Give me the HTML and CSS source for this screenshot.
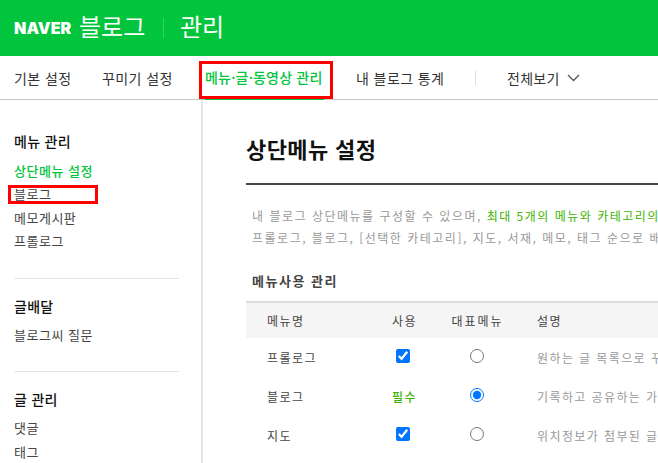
FILE: index.html
```html
<!DOCTYPE html>
<html lang="ko">
<head>
<meta charset="utf-8">
<title>블로그 관리</title>
<link rel="stylesheet" href="styles.css">
</head>
<body>
<header class="top">
  <span class="naver">NAVER</span>
  <span class="blog">블로그</span>
  <span class="top-sep"></span>
  <span class="manage">관리</span>
</header>
<nav class="tabs">
  <a class="tab">기본 설정</a>
  <a class="tab">꾸미기 설정</a>
  <a class="tab active">메뉴·글·동영상 관리</a>
  <a class="tab">내 블로그 통계</a>
  <span class="tab-sep"></span>
  <a class="tab all">전체보기
    <svg class="chev" width="13" height="8" viewBox="0 0 13 8"><path d="M1 1l5.5 5.5L12 1" fill="none" stroke="#555" stroke-width="1.3"/></svg>
  </a>
  <span class="mark mark-tab"></span>
</nav>
<div class="body">
  <aside class="side">
    <section class="group">
      <h3>메뉴 관리</h3>
      <ul>
        <li class="on">상단메뉴 설정</li>
        <li>블로그</li>
        <li>메모게시판</li>
        <li>프롤로그</li>
      </ul>
    </section>
    <section class="group">
      <h3>글배달</h3>
      <ul><li>블로그씨 질문</li></ul>
    </section>
    <section class="group">
      <h3>글 관리</h3>
      <ul><li>댓글</li><li>태그</li></ul>
    </section>
    <span class="mark mark-side"></span>
  </aside>
  <main class="main">
    <h1>상단메뉴 설정</h1>
    <p class="desc">내 블로그 상단메뉴를 구성할 수 있으며, <em>최대 5개의 메뉴와 카테고리의 상단메뉴를 지정할 수 있습니다.</em><br>프롤로그, 블로그, [선택한 카테고리], 지도, 서재, 메모, 태그 순으로 배치됩니다.</p>
    <h2>메뉴사용 관리</h2>
    <table class="grid">
      <thead>
        <tr><th class="c-name">메뉴명</th><th class="c-use">사용</th><th class="c-rep">대표메뉴</th><th class="c-desc">설명</th></tr>
      </thead>
      <tbody>
        <tr>
          <td class="c-name">프롤로그</td>
          <td class="c-use"><input type="checkbox" checked></td>
          <td class="c-rep"><input type="radio" name="rep"></td>
          <td class="c-desc">원하는 글 목록으로 꾸밀 수 있는 메뉴입니다.</td>
        </tr>
        <tr>
          <td class="c-name">블로그</td>
          <td class="c-use must">필수</td>
          <td class="c-rep"><input type="radio" name="rep" checked></td>
          <td class="c-desc">기록하고 공유하는 가장 기본이 되는 메뉴입니다.</td>
        </tr>
        <tr>
          <td class="c-name">지도</td>
          <td class="c-use"><input type="checkbox" checked></td>
          <td class="c-rep"><input type="radio" name="rep"></td>
          <td class="c-desc">위치정보가 첨부된 글을 모아보는 메뉴입니다.</td>
        </tr>
      </tbody>
    </table>
  </main>
</div>
</body>
</html>
```
FILE: styles.css
```css
* { box-sizing: border-box; }
html, body { margin: 0; height: 100%; overflow: hidden; }
body {
  width: 658px;
  height: 463px;
  background: #fff;
  color: #333;
  font-family: "Noto Sans CJK KR", "Noto Sans", sans-serif;
  font-size: 13px;
  overflow: hidden;
}
.top {
  height: 56px;
  background: #03c53d;
  color: #fff;
  display: flex;
  align-items: center;
  padding-left: 14px;
}
.naver { font: 900 16px/1 "Inter", "Liberation Sans", sans-serif; width: 58px; letter-spacing: 0.1px; white-space: nowrap; }
.blog { font-size: 24px; line-height: 1; width: 73px; margin-left: 7px; white-space: nowrap; margin-top: -5px; }
.top-sep { width: 1px; height: 20px; background: #35d264; margin-left: 11px; }
.manage { font-size: 24px; line-height: 1; margin-left: 16px; margin-top: -5px; }
.tabs {
  position: relative;
  height: 44px;
  display: flex;
  align-items: stretch;
  border-bottom: 1px solid #c8c8c8;
  padding-left: 14px;
}
.tab {
  display: flex;
  align-items: center;
  font-size: 14px;
  letter-spacing: 0.4px;
  color: #333;
  white-space: nowrap;
  height: 43px;
}
.tab:nth-child(1) { width: 88px; }
.tab:nth-child(2) { width: 103px; }
.tab.active {
  width: 119px;
  color: #03c53d;
  font-weight: 500;
  letter-spacing: 0.2px;
  margin-right: 32px;
  border-bottom: 2px solid #03c53d;
  height: 44px;
  padding-bottom: 1px;
}
.tab:nth-child(4) { width: 119px; }
.tab-sep { width: 1px; height: 14px; background: #ddd; align-self: center; }
.tab.all { margin-left: 31px; gap: 7px; letter-spacing: 0.3px; }
.chev { display: block; margin-top: 1px; }
.mark { position: absolute; border: 3px solid #f00; pointer-events: none; }
.mark-tab { left: 199px; top: 5px; width: 134px; height: 38px; }
.mark-side { left: 8px; top: 85px; width: 90px; height: 19px; }
.body { display: flex; height: 363px; }
.side {
  position: relative;
  width: 203px;
  flex: none;
  border-right: 2px solid #e5e5e5;
  padding: 0 22px 0 14px;
  overflow: hidden;
}
.group { padding: 17px 0 24px; border-bottom: 1px solid #e5e5e5; }
.group:first-child { padding: 31px 0 26px; }
.group:last-of-type { border-bottom: 0; }
.group h3 { margin: 0 0 7px; font-size: 14px; font-weight: 500; line-height: 20px; color: #111; letter-spacing: 0.3px; }
.group:first-child h3 { margin-bottom: 8px; }
.group ul { margin: 0; padding: 0; list-style: none; }
.group li { font-size: 13px; line-height: 24px; color: #444; white-space: nowrap; letter-spacing: 0.5px; }
.group:first-child li { line-height: 23.33px; }
.group li.on { color: #03c53d; font-weight: 500; }
.main { flex: none; width: 640px; padding: 0 0 0 43px; }
h1 { margin: 0; font-size: 22px; font-weight: 700; color: #111; line-height: 30px; padding: 33px 0 20px; border-bottom: 2px solid #444; letter-spacing: 0.4px; }
.desc { margin: 0; padding: 20px 0 0 6px; font-size: 12px; line-height: 22px; color: #999; white-space: nowrap; letter-spacing: 1.5px; }
.desc em { font-style: normal; color: #3cb400; }
h2 { margin: 0; padding: 22px 0 10px 6px; font-size: 13px; line-height: 20px; font-weight: 700; color: #444; letter-spacing: 1.5px; white-space: nowrap; }
.grid { border-collapse: collapse; table-layout: fixed; width: 500px; white-space: nowrap; }
.grid th { height: 36px; background: #f5f5f5; border-top: 2px solid #ddd; font-weight: 400; font-size: 12px; color: #444; letter-spacing: 1.5px; }
.grid td { height: 39px; font-size: 12px; color: #444; letter-spacing: 1.5px; }
.c-name { width: 132px; text-align: left; padding: 0 0 0 21px; }
.c-use { width: 50px; text-align: center; padding: 0; }
.grid th.c-use, .grid td.must { padding-left: 3px; }
.c-rep { width: 98px; text-align: center; padding: 0; }
.grid th.c-rep { letter-spacing: 2px; padding-left: 1px; }
.grid .c-desc { text-align: left; padding: 0 0 0 11px; width: 220px; overflow: hidden; }
.grid td.c-desc { color: #999; letter-spacing: 1.4px; }
.grid td.must { color: #3cb400; font-weight: 500; }
input { display: block; margin: 0 auto 3px; width: 14px; height: 14px; }
```
